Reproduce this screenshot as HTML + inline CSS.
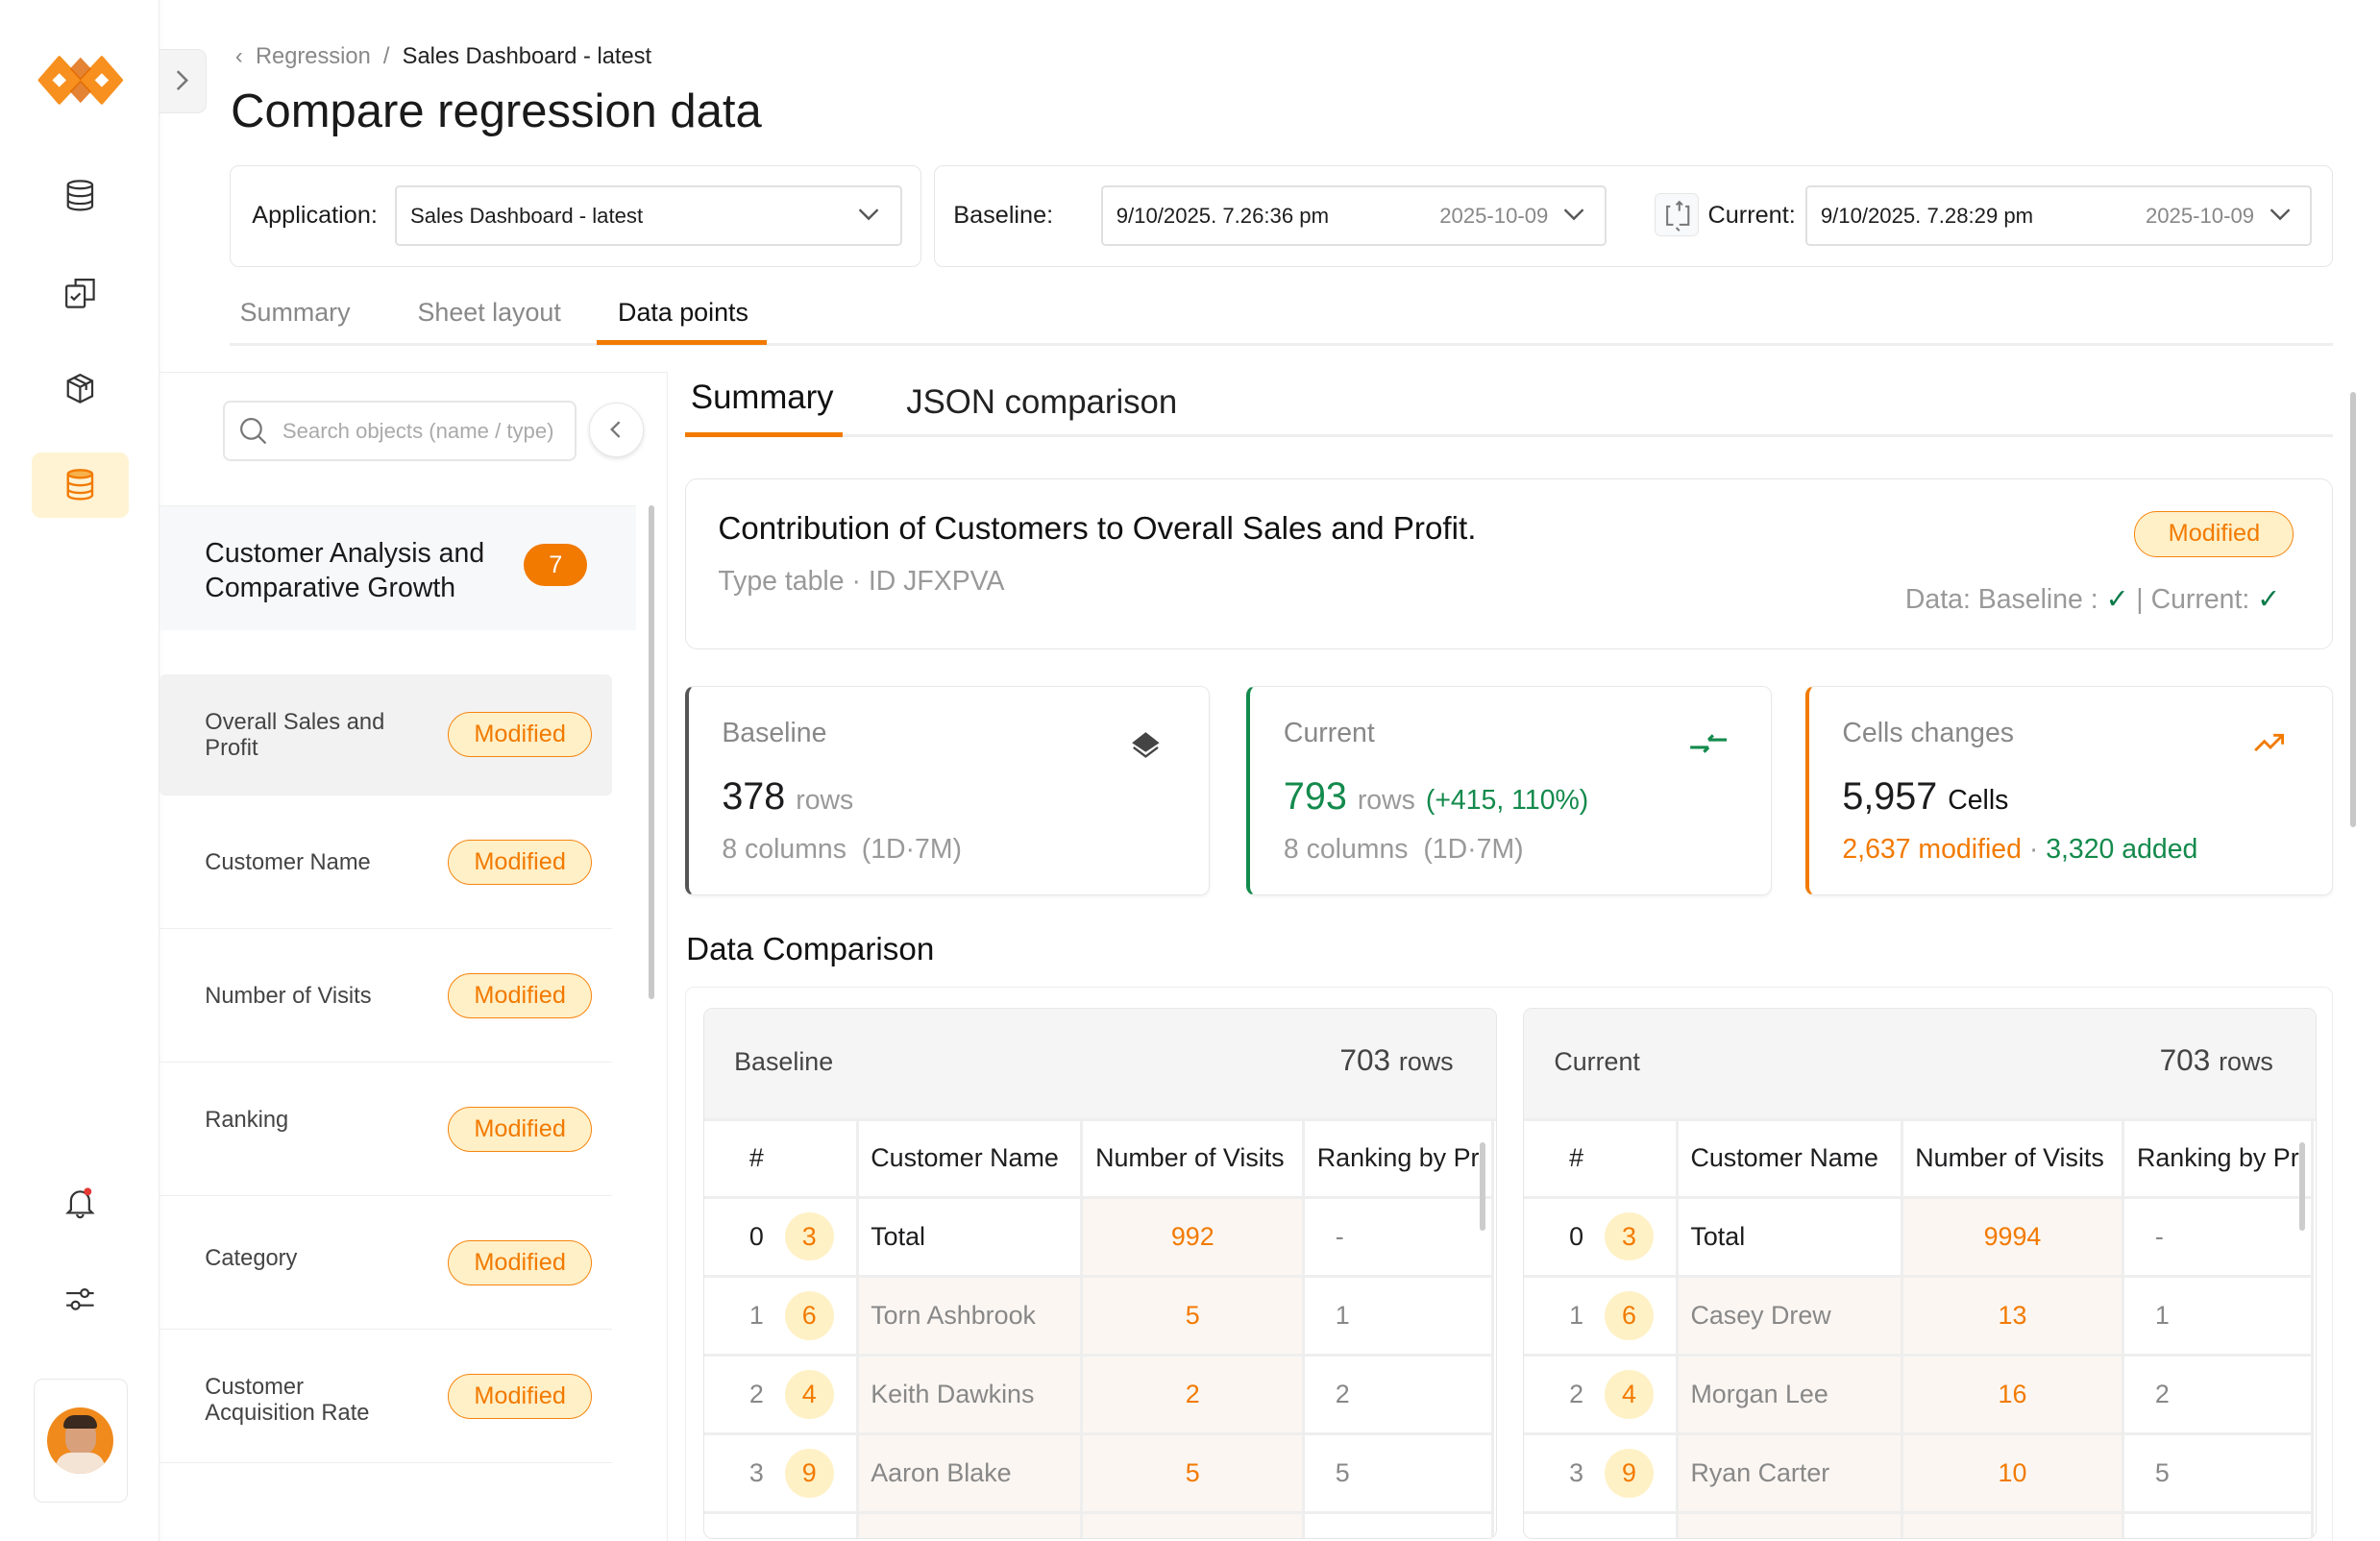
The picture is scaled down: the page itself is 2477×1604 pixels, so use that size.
<!DOCTYPE html>
<html><head><meta charset="utf-8"><style>
*{box-sizing:border-box;margin:0;padding:0}
html,body{width:2477px;height:1604px;overflow:hidden;background:#fff}
#w{position:relative;width:1568px;height:1016px;zoom:1.58;font-family:"Liberation Sans",sans-serif;color:#1d1d1f;overflow:hidden}
.a{position:absolute}
.bx{position:absolute;border:1px solid #e6e6e6;border-radius:6px;background:#fff}
.sel{position:absolute;border:1.5px solid #e0e0e0;border-radius:3px;background:#fff;font-size:14px;line-height:38px;padding-left:9px}
.mod{position:absolute;width:95px;height:30px;border:1px solid #f5850f;background:#fff0c8;color:#f27a00;border-radius:15px;font-size:16px;text-align:center;line-height:28px}
.item{position:absolute;left:105px;width:298px;height:88px;border-bottom:1px solid #eee}
.item .t{position:absolute;left:30px;font-size:15px;color:#444;line-height:17px}
.card{position:absolute;top:452px;height:138px;border:1px solid #e8e8e8;border-radius:6px;background:#fff;box-shadow:0 1px 2px rgba(0,0,0,.05)}
.card .l{position:absolute;left:22px;top:20px;font-size:18px;color:#888}
.card .n{position:absolute;left:22px;top:58px;font-size:25px}
.card .n span{font-size:18px;color:#999}
.card .s{position:absolute;left:22px;top:97px;font-size:18px;color:#999}
.tb{position:absolute;top:664px;width:523px;height:350px;border:1px solid #e6e6e6;border-radius:6px;overflow:hidden}
.tb .h{height:74px;background:#f5f5f5;border-bottom:2px solid #eee;position:relative}
table{border-collapse:collapse;font-size:17px;table-layout:fixed}
td,th{border-right:2px solid #eee;border-bottom:2px solid #eee;height:52px;padding:0 8px;white-space:nowrap;overflow:hidden}
th{font-weight:normal;text-align:left;height:50px}
.c{display:inline-block;width:32px;height:32px;border-radius:16px;background:#fff1c6;color:#f27a00;text-align:center;line-height:32px;margin-left:14px}
.o{color:#f27a00;text-align:center;background:#fbf6f2}
.g{color:#888}
.nm{background:#fbf6f2;color:#888}
</style></head><body><div id="w">
<!-- sidebar -->
<div class="a" style="left:0;top:0;width:105px;height:1016px;border-right:1px solid #ececec;background:#fff;box-shadow:1px 0 3px rgba(0,0,0,.04)"></div>
<svg class="a" style="left:24px;top:35px" width="58" height="36" viewBox="0 0 58 36"><path d="M2 18 L15 3 L29 18 L15 33Z M9 18 L15 24 L21 18 L15 12Z" fill="#f7901e" fill-rule="evenodd" stroke="#f7901e" stroke-width="2" stroke-linejoin="round"/><path d="M29 18 L43 3 L56 18 L43 33Z M37 18 L43 24 L49 18 L43 12Z" fill="#f7901e" fill-rule="evenodd" stroke="#f7901e" stroke-width="2" stroke-linejoin="round"/><path d="M22 10.5 L29 18 L22 25.5 L29 33 L36 25.5 L29 18 L36 10.5 L29 3Z" fill="#dd6400" opacity=".8"/></svg>
<svg class="a" style="left:42px;top:118px" width="22" height="22" viewBox="0 0 22 22" fill="none" stroke="#333" stroke-width="1.4"><ellipse cx="11" cy="4" rx="8" ry="2.5"/><path d="M3 4v14c0 1.4 3.6 2.5 8 2.5s8-1.1 8-2.5V4M3 9c0 1.4 3.6 2.5 8 2.5S19 10.4 19 9M3 14c0 1.4 3.6 2.5 8 2.5s8-1.1 8-2.5"/></svg>
<svg class="a" style="left:42px;top:182px" width="22" height="22" viewBox="0 0 22 22" fill="none" stroke="#333" stroke-width="1.4"><rect x="2" y="6" width="12" height="14" rx="1"/><path d="M8 6V2h12v13h-6M5 13l2 2 4-4"/></svg>
<svg class="a" style="left:42px;top:245px" width="22" height="22" viewBox="0 0 22 22" fill="none" stroke="#333" stroke-width="1.4"><path d="M11 2l8 4v10l-8 4-8-4V6zM3 6l8 4 8-4M11 10v10M7 4l8 4v4"/></svg>
<div class="a" style="left:21px;top:298px;width:64px;height:43px;background:#fff3d4;border-radius:6px"></div>
<svg class="a" style="left:42px;top:308px" width="22" height="22" viewBox="0 0 22 22" fill="none" stroke="#f27a00" stroke-width="1.5"><ellipse cx="11" cy="4" rx="8" ry="2.5" fill="#f7b14d"/><path d="M3 4v14c0 1.4 3.6 2.5 8 2.5s8-1.1 8-2.5V4M3 9c0 1.4 3.6 2.5 8 2.5S19 10.4 19 9M3 14c0 1.4 3.6 2.5 8 2.5s8-1.1 8-2.5"/></svg>
<svg class="a" style="left:42px;top:781px" width="22" height="22" viewBox="0 0 22 22" fill="none" stroke="#333" stroke-width="1.4"><path d="M5 16V10a6 6 0 0112 0v6l2 2H3zM9 19a2 2 0 004 0"/><circle cx="16" cy="4" r="2.5" fill="#e53935" stroke="none"/></svg>
<svg class="a" style="left:42px;top:845px" width="22" height="22" viewBox="0 0 22 22" fill="none" stroke="#333" stroke-width="1.4"><path d="M2 7h18M2 15h18"/><circle cx="14" cy="7" r="2.5" fill="#fff"/><circle cx="8" cy="15" r="2.5" fill="#fff"/></svg>
<div class="a" style="left:22px;top:908px;width:62px;height:82px;border:1px solid #e8e8e8;border-radius:6px;background:#fff"></div>
<div class="a" style="left:31px;top:927px;width:44px;height:44px;border-radius:22px;background:#f08a1c;overflow:hidden"><div class="a" style="left:12px;top:8px;width:20px;height:24px;border-radius:10px;background:#d9a07c"></div><div class="a" style="left:6px;top:30px;width:32px;height:20px;border-radius:10px;background:#f4e4d6"></div><div class="a" style="left:11px;top:5px;width:22px;height:9px;border-radius:8px 8px 2px 2px;background:#3a2a20"></div></div>
<!-- collapse -->
<div class="a" style="left:105px;top:32px;width:31px;height:43px;background:#f4f4f4;border:1px solid #e8e8e8;border-left:none;border-radius:0 6px 6px 0"></div>
<svg class="a" style="left:114px;top:45px" width="12" height="16"><path d="M3 2l6 6-6 6" stroke="#777" stroke-width="1.6" fill="none"/></svg>
<!-- header -->
<div class="a" style="left:155px;top:29px;font-size:15px;color:#888">‹&nbsp; Regression &nbsp;/&nbsp; <span style="color:#222">Sales Dashboard - latest</span></div>
<div class="a" style="left:152px;top:56px;font-size:31px;font-weight:500;color:#1a1a1a">Compare regression data</div>
<div class="bx" style="left:151px;top:109px;width:456px;height:67px"></div>
<div class="a" style="left:166px;top:133px;font-size:16px">Application:</div>
<div class="sel" style="left:260px;top:122px;width:334px;height:40px">Sales Dashboard - latest</div>
<svg class="a" style="left:565px;top:136px" width="14" height="10"><path d="M1 2l6 6 6-6" stroke="#555" stroke-width="1.5" fill="none"/></svg>
<div class="bx" style="left:615px;top:109px;width:922px;height:67px"></div>
<div class="a" style="left:628px;top:133px;font-size:16px">Baseline:</div>
<div class="sel" style="left:725px;top:122px;width:333px;height:40px">9/10/2025. 7.26:36 pm<span style="position:absolute;left:222px;color:#888">2025-10-09</span></div>
<svg class="a" style="left:1030px;top:136px" width="14" height="10"><path d="M1 2l6 6 6-6" stroke="#555" stroke-width="1.5" fill="none"/></svg>
<div class="a" style="left:1090px;top:127px;width:29px;height:29px;border:1px solid #e6e6e6;border-radius:4px;background:#f8f9fb"></div>
<svg class="a" style="left:1096px;top:131px" width="18" height="22" fill="none" stroke="#777" stroke-width="1.3"><path d="M4 5h-2v12h4M8 4l2-2 2 2M10 2v6M14 5h2v12h-6M8 19l2 2"/></svg>
<div class="a" style="left:1125px;top:133px;font-size:16px">Current:</div>
<div class="sel" style="left:1189px;top:122px;width:334px;height:40px">9/10/2025. 7.28:29 pm<span style="position:absolute;left:223px;color:#888">2025-10-09</span></div>
<svg class="a" style="left:1495px;top:136px" width="14" height="10"><path d="M1 2l6 6 6-6" stroke="#555" stroke-width="1.5" fill="none"/></svg>
<!-- tabs -->
<div class="a" style="left:151px;top:226px;width:1386px;height:2px;background:#eee"></div>
<div class="a" style="left:158px;top:196px;font-size:17px;color:#888">Summary</div>
<div class="a" style="left:275px;top:196px;font-size:17px;color:#888">Sheet layout</div>
<div class="a" style="left:407px;top:196px;font-size:17px;color:#111">Data points</div>
<div class="a" style="left:393px;top:224px;width:112px;height:3px;background:#f27a00"></div>
<!-- left panel -->
<div class="a" style="left:105px;top:245px;width:335px;height:771px;border-top:1px solid #eee;border-right:1px solid #eee"></div>
<div class="a" style="left:147px;top:264px;width:233px;height:40px;border:1.5px solid #e6e6e6;border-radius:5px"></div>
<svg class="a" style="left:157px;top:274px" width="20" height="20" fill="none" stroke="#777" stroke-width="1.4"><circle cx="8.5" cy="8.5" r="6.5"/><path d="M13 13l5 5"/></svg>
<div class="a" style="left:186px;top:276px;font-size:14px;color:#aaa">Search objects (name / type)</div>
<div class="a" style="left:388px;top:265px;width:36px;height:36px;border-radius:18px;border:1px solid #e6e6e6;box-shadow:0 1px 3px rgba(0,0,0,.12);background:#fff"></div>
<svg class="a" style="left:400px;top:276px" width="12" height="14"><path d="M8 2l-5 5 5 5" stroke="#777" stroke-width="1.5" fill="none"/></svg>
<div class="a" style="left:105px;top:333px;width:314px;height:82px;background:#f7f8fa;border-top:1px solid #eee"></div>
<div class="a" style="left:135px;top:353px;font-size:18px;line-height:23px;font-weight:500;color:#1a1a1a">Customer Analysis and<br>Comparative Growth</div>
<div class="a" style="left:345px;top:358px;width:42px;height:28px;border-radius:14px;background:#f27a00;color:#fff;font-size:16px;text-align:center;line-height:28px">7</div>
<div class="a" style="left:427px;top:333px;width:4px;height:325px;border-radius:2px;background:#c8c8c8"></div>
<div class="item" style="top:444px;height:80px;background:#f2f2f2;border-radius:4px"><div class="t" style="top:24px">Overall Sales and<br>Profit</div><div class="mod" style="left:190px;top:25px">Modified</div></div>
<div class="item" style="top:524px"><div class="t" style="top:36px">Customer Name</div><div class="mod" style="left:190px;top:29px">Modified</div></div>
<div class="item" style="top:612px"><div class="t" style="top:36px">Number of Visits</div><div class="mod" style="left:190px;top:29px">Modified</div></div>
<div class="item" style="top:700px"><div class="t" style="top:30px">Ranking</div><div class="mod" style="left:190px;top:29px">Modified</div></div>
<div class="item" style="top:788px"><div class="t" style="top:33px">Category</div><div class="mod" style="left:190px;top:29px">Modified</div></div>
<div class="item" style="top:876px"><div class="t" style="top:30px">Customer<br>Acquisition Rate</div><div class="mod" style="left:190px;top:29px">Modified</div></div>
<!-- right -->
<div class="a" style="left:451px;top:286px;width:1086px;height:2px;background:#eee"></div>
<div class="a" style="left:455px;top:250px;font-size:22px;color:#111">Summary</div>
<div class="a" style="left:451px;top:285px;width:104px;height:3px;background:#f27a00"></div>
<div class="a" style="left:597px;top:253px;font-size:22px;color:#222">JSON comparison</div>
<div class="a" style="left:1548px;top:258px;width:4px;height:287px;border-radius:2px;background:#c8c8c8"></div>
<div class="bx" style="left:451px;top:315px;width:1086px;height:113px;border-radius:8px"></div>
<div class="a" style="left:473px;top:337px;font-size:21px;font-weight:500;color:#111">Contribution of Customers to Overall Sales and Profit.</div>
<div class="a" style="left:473px;top:373px;font-size:18px;color:#999">Type table · ID JFXPVA</div>
<div class="mod" style="left:1406px;top:337px;width:105px;height:30px">Modified</div>
<div class="a" style="left:1255px;top:384px;font-size:18px;color:#999">Data: Baseline : <span style="color:#0a7a4a">✓</span> | Current: <span style="color:#0a7a4a">✓</span></div>
<div class="card" style="left:451px;width:346px;border-left:3px solid #555"><div class="l">Baseline</div><div class="n">378 <span>rows</span></div><div class="s">8 columns &nbsp;(1D·7M)</div>
<svg class="a" style="left:290px;top:28px" width="22" height="22"><path d="M11 2l9 7-9 6-9-6z" fill="#444"/><path d="M3 12l8 6 8-6" stroke="#444" stroke-width="1.5" fill="none"/></svg></div>
<div class="card" style="left:821px;width:346px;border-left:3px solid #138a4c"><div class="l">Current</div><div class="n" style="color:#138a4c">793 <span>rows</span> <span style="color:#138a4c">(+415, 110%)</span></div><div class="s">8 columns &nbsp;(1D·7M)</div>
<svg class="a" style="left:288px;top:28px" width="28" height="20" fill="none" stroke="#138a4c" stroke-width="2"><path d="M14 7h12M14 7l3-3M2 12h12M14 12l-3 3"/></svg></div>
<div class="card" style="left:1189px;width:348px;border-left:3px solid #f27a00"><div class="l">Cells changes</div><div class="n">5,957 <span style="color:#111">Cells</span></div><div class="s"><span style="color:#f27a00">2,637 modified</span> · <span style="color:#138a4c">3,320 added</span></div>
<svg class="a" style="left:292px;top:28px" width="24" height="18" fill="none" stroke="#f27a00" stroke-width="1.8"><path d="M2 14l6-6 4 4 8-8M14 4h6v6"/></svg></div>
<div class="a" style="left:452px;top:614px;font-size:21px;color:#111">Data Comparison</div>
<div class="a" style="left:451px;top:650px;width:1086px;height:370px;border:1px solid #eee;border-radius:6px"></div>
<div class="tb" style="left:463px"><div class="h"><span class="a" style="left:20px;top:25px;font-size:17px;color:#444">Baseline</span><span class="a" style="right:28px;top:22px;font-size:20px;color:#444">703 <span style="font-size:17px">rows</span></span></div>
<table><colgroup><col style="width:101px"><col style="width:148px"><col style="width:146px"><col style="width:110px"></colgroup>
<tr><th style="padding-left:30px">#</th><th>Customer Name</th><th>Number of Visits</th><th>Ranking by Pr</th></tr>
<tr><td style="padding-left:30px">0<span class="c">3</span></td><td>Total</td><td class="o">992</td><td class="g" style="padding-left:20px">-</td></tr>
<tr><td class="g" style="padding-left:30px">1<span class="c">6</span></td><td class="nm">Torn Ashbrook</td><td class="o">5</td><td class="g" style="padding-left:20px">1</td></tr>
<tr><td class="g" style="padding-left:30px">2<span class="c">4</span></td><td class="nm">Keith Dawkins</td><td class="o">2</td><td class="g" style="padding-left:20px">2</td></tr>
<tr><td class="g" style="padding-left:30px">3<span class="c">9</span></td><td class="nm">Aaron Blake</td><td class="o">5</td><td class="g" style="padding-left:20px">5</td></tr>
<tr><td></td><td class="nm"></td><td class="o"></td><td></td></tr></table>
<div class="a" style="left:511px;top:88px;width:4px;height:58px;border-radius:2px;background:#ccc"></div></div>
<div class="tb" style="left:1003px"><div class="h"><span class="a" style="left:20px;top:25px;font-size:17px;color:#444">Current</span><span class="a" style="right:28px;top:22px;font-size:20px;color:#444">703 <span style="font-size:17px">rows</span></span></div>
<table><colgroup><col style="width:101px"><col style="width:148px"><col style="width:146px"><col style="width:110px"></colgroup>
<tr><th style="padding-left:30px">#</th><th>Customer Name</th><th>Number of Visits</th><th>Ranking by Pr</th></tr>
<tr><td style="padding-left:30px">0<span class="c">3</span></td><td>Total</td><td class="o">9994</td><td class="g" style="padding-left:20px">-</td></tr>
<tr><td class="g" style="padding-left:30px">1<span class="c">6</span></td><td class="nm">Casey Drew</td><td class="o">13</td><td class="g" style="padding-left:20px">1</td></tr>
<tr><td class="g" style="padding-left:30px">2<span class="c">4</span></td><td class="nm">Morgan Lee</td><td class="o">16</td><td class="g" style="padding-left:20px">2</td></tr>
<tr><td class="g" style="padding-left:30px">3<span class="c">9</span></td><td class="nm">Ryan Carter</td><td class="o">10</td><td class="g" style="padding-left:20px">5</td></tr>
<tr><td></td><td class="nm"></td><td class="o"></td><td></td></tr></table>
<div class="a" style="left:511px;top:88px;width:4px;height:58px;border-radius:2px;background:#ccc"></div></div>
</div></body></html>
